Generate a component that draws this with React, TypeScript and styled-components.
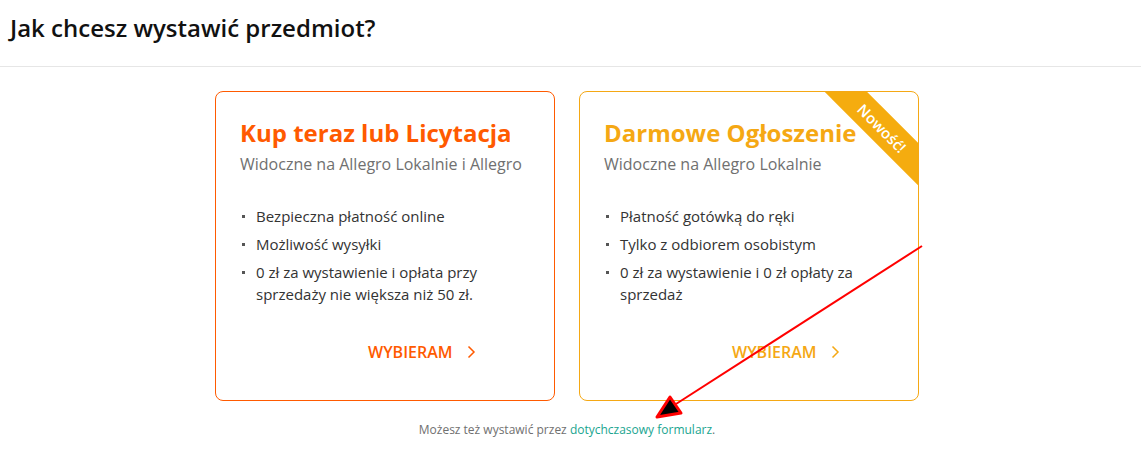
import styled, { createGlobalStyle } from "styled-components";

const GlobalStyle = createGlobalStyle`
  body {
    margin: 0;
    background: #fff;
    font-family: "Open Sans", "Liberation Sans", sans-serif;
  }
`;

const Page = styled.div`
  position: relative;
  width: 1141px;
  height: 471px;
  overflow: hidden;
`;

const Header = styled.header`
  height: 67px;
  border-bottom: 1px solid #e6e6e6;
  box-sizing: border-box;
  padding: 13px 0 0 10px;
`;

const Heading = styled.h1`
  margin: 0;
  font-size: 24px;
  font-weight: 600;
  color: #111;
  line-height: 30px;
`;

const Cards = styled.div`
  display: flex;
  justify-content: center;
  gap: 24px;
  padding: 24px 7px 0 0;
`;

const Card = styled.div<{ $accent: string }>`
  position: relative;
  width: 340px;
  height: 310px;
  box-sizing: border-box;
  border: 1px solid ${(p) => p.$accent};
  border-radius: 8px;
  padding: 25px 24px 0 24px;
  display: flex;
  flex-direction: column;
  overflow: hidden;
`;

const Title = styled.h2<{ $accent: string }>`
  margin: 0;
  font-size: 24px;
  font-weight: 700;
  line-height: 32px;
  color: ${(p) => p.$accent};
`;

const Subtitle = styled.p`
  margin: 3px 0 0 0;
  font-size: 16px;
  line-height: 24px;
  color: #707070;
`;

const List = styled.ul`
  list-style: none;
  margin: 29px 0 0 0;
  padding: 0;
  display: flex;
  flex-direction: column;
  gap: 6px;
`;

const Item = styled.li`
  position: relative;
  padding-left: 16px;
  font-size: 15px;
  line-height: 22px;
  color: #333;
  width: 260px;

  &::before {
    content: "";
    position: absolute;
    left: 2px;
    top: 10px;
    width: 3px;
    height: 3px;
    background: #555;
  }
`;

const Choose = styled.a<{ $accent: string }>`
  margin-top: auto;
  margin-bottom: 36px;
  align-self: flex-start;
  margin-left: 128px;
  display: flex;
  align-items: center;
  gap: 14px;
  font-size: 16px;
  font-weight: 600;
  color: ${(p) => p.$accent};
  text-decoration: none;
  cursor: pointer;
  line-height: 24px;
`;

const Ribbon = styled.div`
  position: absolute;
  top: 21px;
  right: -44px;
  width: 160px;
  transform: rotate(45deg);
  background: #f5ac0f;
  color: #fff;
  font-size: 15px;
  font-weight: 600;
  line-height: 30px;
  text-align: center;
`;

const Footer = styled.p`
  margin: 20px 0 0 0;
  padding-right: 7px;
  text-align: center;
  font-size: 12px;
  color: #707070;
`;

const FooterLink = styled.a`
  color: #1aa58f;
  text-decoration: none;
`;

const Annotation = styled.svg`
  position: absolute;
  left: 0;
  top: 0;
  pointer-events: none;
`;

const Chevron = () => (
  <svg width="9" height="14" viewBox="0 0 9 14" fill="none">
    <path d="M1.5 1.5 L7 7 L1.5 12.5" stroke="currentColor" strokeWidth="1.5" />
  </svg>
);

const ORANGE = "#ff5a00";
const AMBER = "#f5a814";

export default function App() {
  return (
    <Page>
      <GlobalStyle />
      <Header>
        <Heading>Jak chcesz wystawić przedmiot?</Heading>
      </Header>
      <Cards>
        <Card $accent={ORANGE}>
          <Title $accent={ORANGE}>Kup teraz lub Licytacja</Title>
          <Subtitle>Widoczne na Allegro Lokalnie i Allegro</Subtitle>
          <List>
            <Item>Bezpieczna płatność online</Item>
            <Item>Możliwość wysyłki</Item>
            <Item>0 zł za wystawienie i opłata przy sprzedaży nie większa niż 50 zł.</Item>
          </List>
          <Choose $accent={ORANGE}>
            WYBIERAM <Chevron />
          </Choose>
        </Card>
        <Card $accent={AMBER}>
          <Ribbon>Nowość!</Ribbon>
          <Title $accent={AMBER}>Darmowe Ogłoszenie</Title>
          <Subtitle>Widoczne na Allegro Lokalnie</Subtitle>
          <List>
            <Item>Płatność gotówką do ręki</Item>
            <Item>Tylko z odbiorem osobistym</Item>
            <Item>0 zł za wystawienie i 0 zł opłaty za sprzedaż</Item>
          </List>
          <Choose $accent={AMBER}>
            WYBIERAM <Chevron />
          </Choose>
        </Card>
      </Cards>
      <Footer>
        Możesz też wystawić przez <FooterLink>dotychczasowy formularz</FooterLink>.
      </Footer>
      <Annotation width="1141" height="471" viewBox="0 0 1141 471">
        <line x1="922" y1="246" x2="676" y2="404" stroke="#ff0000" strokeWidth="2" />
        <polygon
          points="657,417 670,397 681,413"
          fill="#000"
          stroke="#ff0000"
          strokeWidth="3"
          strokeLinejoin="round"
        />
      </Annotation>
    </Page>
  );
}
